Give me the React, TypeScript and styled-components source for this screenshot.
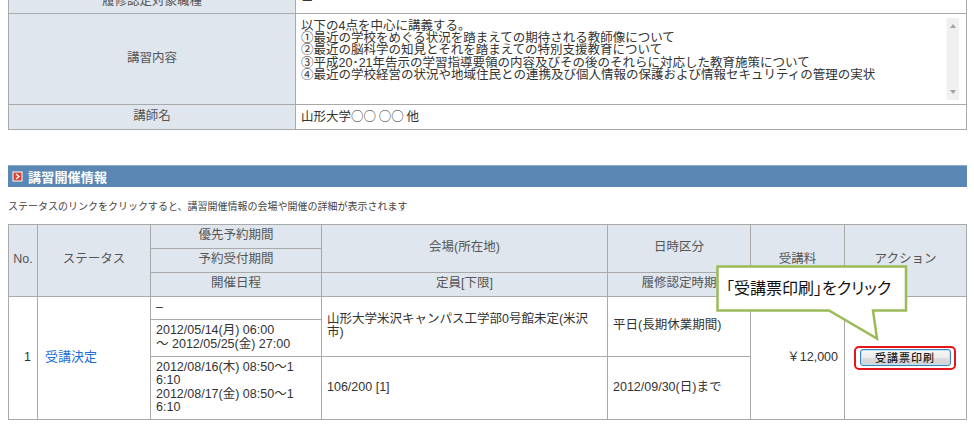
import React from 'react';
import styled, { createGlobalStyle } from 'styled-components';

const Global = createGlobalStyle`
  html, body { margin: 0; padding: 0; background: #fff; }
  body {
    font-family: "Liberation Sans", "Noto Sans CJK JP", sans-serif;
    color: #333;
    overflow: hidden;
  }
`;

const Page = styled.div`
  position: relative;
  display: flex;
  flex-direction: column;
  width: 959px;
  padding: 0 8px;
`;

const Table = styled.table<{ $top?: number }>`
  width: 959px;
  border-collapse: collapse;
  table-layout: fixed;
  margin-top: ${(p) => p.$top ?? 0}px;
  font-size: 12.5px;
  line-height: 13.5px;
`;

const Label = styled.th<{ $h: number }>`
  height: ${(p) => p.$h}px;
  padding: 0 4px;
  box-sizing: border-box;
  background: #dfe6ee;
  border: 1px solid #a9a9a9;
  color: #555;
  font-weight: normal;
  text-align: center;
  vertical-align: middle;
`;

const Value = styled.td`
  padding: 4px 5px;
  border: 1px solid #a9a9a9;
  color: #333;
  text-align: left;
  vertical-align: middle;
`;

const CjkText = styled.span`
  font-family: "Noto Sans CJK JP", sans-serif;
`;

const Memo = styled.div`
  display: flex;
  height: 82px;
  margin: 0 2px 0 0;
`;

const MemoText = styled.div`
  flex: 1;
  padding-top: 2px;
  white-space: pre-line;
  line-height: 12.2px;
`;

const ScrollTrack = styled.div`
  width: 13px;
  display: flex;
  flex-direction: column;
  justify-content: space-between;
  align-items: center;
  background: #f0f0f0;
  border-left: 1px solid #f7f7f7;
  padding: 6px 0;
  box-sizing: border-box;
`;

const Arrow = styled.span<{ $down?: boolean }>`
  width: 0;
  height: 0;
  border-left: 3.5px solid transparent;
  border-right: 3.5px solid transparent;
  ${(p) =>
    p.$down
      ? 'border-top: 4px solid #a3a3a3;'
      : 'border-bottom: 4px solid #a3a3a3;'}
`;

const SectionBar = styled.div`
  margin-top: 35px;
  height: 22px;
  background: #5b87b4;
  border-top: 1px solid #8eaccb;
  box-sizing: border-box;
  display: flex;
  align-items: center;
  gap: 5px;
  padding-left: 4px;
`;

const SectionTitle = styled.h2`
  margin: 0;
  font-size: 13px;
  font-weight: bold;
  color: #fff;
  letter-spacing: 0.2px;
`;

const Note = styled.p`
  margin: 13px 0 10px;
  font-size: 10px;
  line-height: 14px;
  color: #444;
`;

const Head = styled.th<{ $h?: number }>`
  height: ${(p) => (p.$h ? `${p.$h}px` : 'auto')};
  padding: 0 4px;
  box-sizing: border-box;
  background: #dfe6ee;
  border: 1px solid #a9a9a9;
  color: #555;
  font-weight: normal;
  text-align: center;
  vertical-align: middle;
`;

const Cell = styled.td<{ $align?: string; $h?: number }>`
  height: ${(p) => (p.$h ? `${p.$h}px` : 'auto')};
  box-sizing: border-box;
  padding: 4px 6px 4px 5px;
  border: 1px solid #a9a9a9;
  text-align: ${(p) => p.$align ?? 'left'};
  vertical-align: middle;
  color: #333;
`;

const StatusLink = styled.a`
  color: #1b6fd6;
  text-decoration: none;
  margin-left: 2px;
  font-size: 13px;
`;

const Highlight = styled.span`
  display: inline-flex;
  align-items: center;
  justify-content: center;
  width: 102px;
  height: 24px;
  box-sizing: border-box;
  border: 2px solid #e8141b;
  border-radius: 5px;
`;

const PrintButton = styled.button`
  width: 91px;
  height: 17px;
  padding: 0;
  border: 1px solid #3d82b8;
  border-radius: 3px;
  background: linear-gradient(#f6f6f6 0%, #ececec 50%, #dddddd 51%, #d2d2d2 100%);
  box-shadow: inset 0 0 0 1px #bfe3f6;
  font-family: "Noto Sans CJK JP", sans-serif;
  font-size: 11px;
  font-weight: 500;
  line-height: 15px;
  letter-spacing: 1px;
  color: #1a1a1a;
`;

const Callout = styled.div`
  position: absolute;
  left: 716px;
  top: 265px;
  width: 192px;
  height: 76px;
`;

const CalloutText = styled.span`
  position: absolute;
  left: 10px;
  top: 10px;
  font-family: "Noto Sans CJK JP", sans-serif;
  font-feature-settings: "palt";
  font-size: 16px;
  line-height: 24px;
  color: #111;
  white-space: nowrap;
`;

function SectionIcon() {
  return (
    <svg width="11" height="11" viewBox="0 0 11 11">
      <rect x="0.5" y="0.5" width="10" height="10" fill="#fff" />
      <rect x="1.5" y="1.5" width="8" height="8" fill="#d8412c" />
      <path d="M4 3 L7 5.5 L4 8" fill="none" stroke="#fff" strokeWidth="1.4" />
    </svg>
  );
}

const memo = `以下の4点を中心に講義する。
①最近の学校をめぐる状況を踏まえての期待される教師像について
②最近の脳科学の知見とそれを踏まえての特別支援教育について
③平成20･21年告示の学習指導要領の内容及びその後のそれらに対応した教育施策について
④最近の学校経営の状況や地域住民との連携及び個人情報の保護および情報セキュリティの管理の実状`;

export default function App() {
  return (
    <>
      <Global />
      <Page>
        <Table $top={-11}>
          <colgroup>
            <col style={{ width: 287 }} />
            <col />
          </colgroup>
          <tbody>
            <tr>
              <Label $h={24}>履修認定対象職種</Label>
              <Value>－</Value>
            </tr>
            <tr>
              <Label $h={91}>講習内容</Label>
              <Value>
                <Memo>
                  <MemoText>{memo}</MemoText>
                  <ScrollTrack>
                    <Arrow />
                    <Arrow $down />
                  </ScrollTrack>
                </Memo>
              </Value>
            </tr>
            <tr>
              <Label $h={24}>講師名</Label>
              <Value>
                <CjkText>山形大学○○ ○○ 他</CjkText>
              </Value>
            </tr>
          </tbody>
        </Table>

        <SectionBar>
          <SectionIcon />
          <SectionTitle>講習開催情報</SectionTitle>
        </SectionBar>

        <Note>ステータスのリンクをクリックすると、講習開催情報の会場や開催の詳細が表示されます</Note>

        <Table>
          <colgroup>
            <col style={{ width: 29 }} />
            <col style={{ width: 113 }} />
            <col style={{ width: 171 }} />
            <col style={{ width: 286 }} />
            <col style={{ width: 143 }} />
            <col style={{ width: 94 }} />
            <col />
          </colgroup>
          <thead>
            <tr>
              <Head rowSpan={3}>No.</Head>
              <Head rowSpan={3}>ステータス</Head>
              <Head $h={24}>優先予約期間</Head>
              <Head rowSpan={2}>会場(所在地)</Head>
              <Head rowSpan={2}>日時区分</Head>
              <Head rowSpan={3}>受講料</Head>
              <Head rowSpan={3}>アクション</Head>
            </tr>
            <tr>
              <Head $h={24}>予約受付期間</Head>
            </tr>
            <tr>
              <Head $h={24}>開催日程</Head>
              <Head>定員[下限]</Head>
              <Head>履修認定時期</Head>
            </tr>
          </thead>
          <tbody>
            <tr>
              <Cell rowSpan={3} $align="right">1</Cell>
              <Cell rowSpan={3}>
                <StatusLink href="#">受講決定</StatusLink>
              </Cell>
              <Cell $h={23}>–</Cell>
              <Cell rowSpan={2}>
                山形大学米沢キャンパス工学部0号館未定(米沢
                <br />
                市)
              </Cell>
              <Cell rowSpan={2}>平日(長期休業期間)</Cell>
              <Cell rowSpan={3} $align="right">￥12,000</Cell>
              <Cell rowSpan={3} $align="center">
                <Highlight>
                  <PrintButton type="button">受講票印刷</PrintButton>
                </Highlight>
              </Cell>
            </tr>
            <tr>
              <Cell $h={37}>
                2012/05/14(月) 06:00
                <br />
                ～ 2012/05/25(金) 27:00
              </Cell>
            </tr>
            <tr>
              <Cell $h={63}>
                2012/08/16(木) 08:50～1
                <br />
                6:10
                <br />
                2012/08/17(金) 08:50～1
                <br />
                6:10
              </Cell>
              <Cell>106/200 [1]</Cell>
              <Cell>2012/09/30(日)まで</Cell>
            </tr>
          </tbody>
        </Table>

        <Callout>
          <svg width="192" height="76" viewBox="0 0 192 76">
            <path
              d="M1.5 1.5 H190 V45.5 H157 L161 73.5 L113 45.5 H1.5 Z"
              fill="#fff"
              stroke="#9bbb59"
              strokeWidth="2.5"
              strokeLinejoin="miter"
            />
          </svg>
          <CalloutText>「受講票印刷」をクリック</CalloutText>
        </Callout>
      </Page>
    </>
  );
}
